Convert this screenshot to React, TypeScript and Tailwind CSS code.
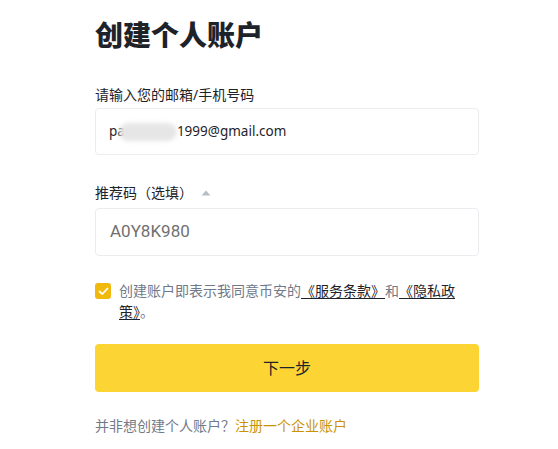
import React from 'react';

export default function App() {
  const font = { fontFamily: '"Noto Sans", "Noto Sans CJK SC", sans-serif' };
  return (
    <div className="min-h-[449px] w-[558px] bg-white text-[#1e2329]" style={font}>
      <div className="ml-[95px] w-[384px] pt-[17px]">
        <h1 className="text-[28px] leading-[36px] font-black text-[#1e2329]">创建个人账户</h1>

        <label className="mt-8 block text-[14px] leading-5 text-[#1e2329]">请输入您的邮箱/手机号码</label>
        <div className="mt-[3px] flex h-[47px] items-center rounded-[4px] border border-[#eaecef] px-[13px] text-[13.5px] text-[#1e2329]">
          <span>pa</span>
          <span className="-ml-[6px] inline-block h-[18px] w-[58px] rounded-full bg-[#e6e6e6] blur-[2px]" />
          <span>1999@gmail.com</span>
        </div>

        <div className="mt-[28px] flex h-5 items-center gap-[8px] text-[14px] leading-5 text-[#1e2329]">
          <span>推荐码（选填）</span>
          <svg width="10" height="6" viewBox="0 0 10 6">
            <path d="M5 0.5 L9.5 5.5 L0.5 5.5 Z" fill="#b7bdc6" />
          </svg>
        </div>
        <div className="mt-[5px] flex h-[48px] items-center rounded-[4px] border border-[#eaecef] px-[14px] text-[17px] text-[#707070]" style={{ fontFamily: 'Roboto, sans-serif' }}>
          A0Y8K980
        </div>

        <div className="mt-[24px] flex items-start gap-[8px]">
          <div className="mt-[3px] flex h-4 w-4 shrink-0 items-center justify-center rounded-[3px] bg-[#f0b90b]">
            <svg width="11" height="9" viewBox="0 0 11 9">
              <path d="M1.5 4.5 L4.3 7 L9.5 1.5" fill="none" stroke="white" strokeWidth="1.8" strokeLinecap="round" strokeLinejoin="round" />
            </svg>
          </div>
          <p className="text-[14px] leading-[21px] text-[#707a8a]">
            创建账户即表示我同意币安的
            <a className="text-[#1e2329] underline underline-offset-2">《服务条款》</a>
            和
            <a className="text-[#1e2329] underline underline-offset-2">《隐私政策》</a>。
          </p>
        </div>

        <button className="mt-[22px] flex h-[48px] w-full items-center justify-center rounded-[4px] bg-[#fcd535] text-[16px] text-[#1e2329]">
          下一步
        </button>

        <p className="mt-[24px] text-[14px] leading-5 text-[#707a8a]">
          并非想创建个人账户？<a className="text-[#c99400]">注册一个企业账户</a>
        </p>
      </div>
    </div>
  );
}
